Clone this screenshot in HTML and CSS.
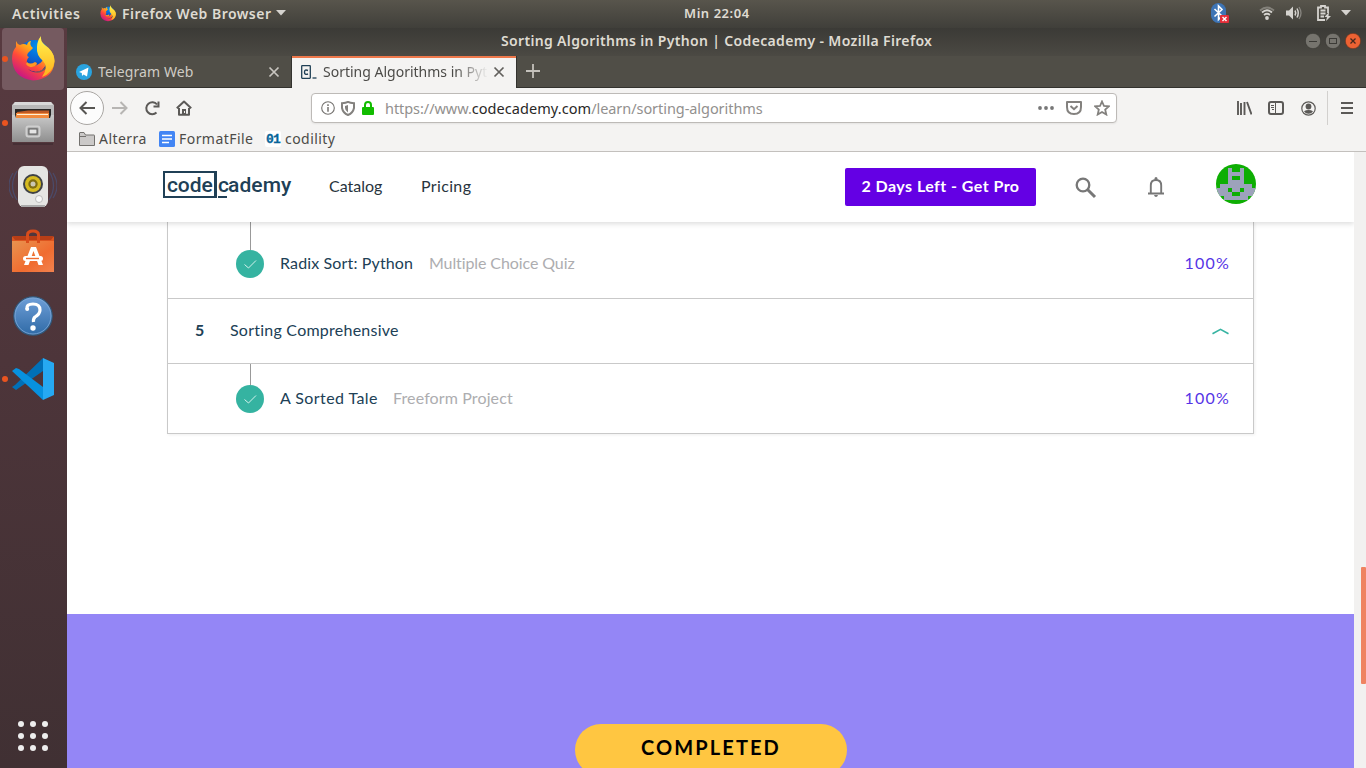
FILE: index.html
```html
<!DOCTYPE html>
<html lang="en">
<head>
<meta charset="utf-8">
<title>Sorting Algorithms in Python | Codecademy</title>
<link rel="stylesheet" href="styles.css">
</head>
<body>
<svg width="0" height="0" class="defs">
  <defs>
    <linearGradient id="fxBody" x1="0.8" y1="0" x2="0.15" y2="0.9"><stop offset="0" stop-color="#ffe226"/><stop offset=".35" stop-color="#ffa51a"/><stop offset=".62" stop-color="#ff4a3a"/><stop offset="1" stop-color="#c4128a"/></linearGradient>
    <linearGradient id="fxFlame" x1="0" y1="0" x2="0" y2="1"><stop offset="0" stop-color="#fff44f"/><stop offset="1" stop-color="#ffb01c"/></linearGradient>
    <radialGradient id="fxGlobe" cx=".6" cy=".2" r=".9"><stop offset="0" stop-color="#0090ed"/><stop offset=".5" stop-color="#0b5fd0"/><stop offset="1" stop-color="#27206b"/></radialGradient>
    <linearGradient id="steel" x1="0" y1="0" x2="0" y2="1"><stop offset="0" stop-color="#c9c9c9"/><stop offset="1" stop-color="#8f8f8f"/></linearGradient>
    <linearGradient id="bag" x1="0" y1="0" x2="1" y2="1"><stop offset="0" stop-color="#e89450"/><stop offset=".6" stop-color="#f06c30"/><stop offset="1" stop-color="#f2824f"/></linearGradient>
    <linearGradient id="helpBlue" x1="0" y1="0" x2="0" y2="1"><stop offset="0" stop-color="#6f9fd8"/><stop offset="1" stop-color="#2f6aa6"/></linearGradient>
    <symbol id="firefox" viewBox="0 0 44 46">
      <circle cx="23" cy="20" r="16" fill="url(#fxGlobe)"/>
      <path d="M5 5Q6 8 9 9Q13 7 16 9Q17 5 20 5Q18 9 22 12L17 17Q15 20 18 21Q15 24 16 28Q19 32 26 29Q33 26 33 19Q38 28 31 34Q24 38 17 33Q27 41 36 32Q41 24 37 12Q44 18 43.500 26Q42 43 22 44.500Q2 42 1 23Q1 15 5 11Z" fill="url(#fxBody)"/>
      <path d="M30 0Q29 5 34 9Q43 15 43.500 25Q42 37 31 41Q38 31 32 25Q25 19 26 11Q26 5 30 0Z" fill="url(#fxFlame)"/>
      <path d="M16 26Q19 29 24 26Q28 27 24 30Q18 33 15 28Z" fill="#ff9722"/>
    </symbol>
    <symbol id="check" viewBox="0 0 28 28"><circle cx="14" cy="14" r="14" fill="#35b3a1"/><path d="M8.500 14.500L12.500 18L20 10.500" fill="none" stroke="#d4f2ec" stroke-width="1"/></symbol>
  </defs>
</svg>
<div class="desktop">
  <header class="panel">
    <span class="panel-activities">Activities</span>
    <svg class="panel-fx" width="16" height="17"><use href="#firefox"/></svg>
    <span class="panel-app">Firefox Web Browser</span>
    <svg class="panel-caret" width="10" height="6"><path d="M0 0H10L5 5.500Z" fill="#d5d3cf"/></svg>
    <span class="panel-clock">Min 22:04</span>
    <div class="panel-tray">
      <svg class="bluetooth" width="19" height="21" viewBox="0 0 19 21"><rect x="0" y="0" width="15" height="20" rx="7.500" fill="#3d74b5"/><path d="M3.500 6L11 13L7.500 16.500V3L11 6.500L3.500 13.500" fill="none" stroke="#fff" stroke-width="1.600"/><rect x="9" y="12" width="9" height="8" rx="1" fill="#e32d38"/><path d="M11.500 14L15.500 18M15.500 14L11.500 18" stroke="#fff" stroke-width="1.400"/></svg>
      <svg class="wifi" width="16" height="14" viewBox="0 0 16 14"><g fill="none" stroke-width="1.700"><path d="M1 4.500Q8 -1.500 15 4.500" stroke="#83817a"/><path d="M3 6.500Q8 2 13 6.500M5 9Q8 6.500 11 9" stroke="#d5d3cf"/></g><circle cx="8" cy="12" r="1.900" fill="#d5d3cf"/></svg>
      <svg class="volume" width="16" height="14" viewBox="0 0 16 14"><path d="M0 4.500H3L7 .5V13.500L3 9.500H0Z" fill="#d5d3cf"/><path d="M9 4.500Q10.500 7 9 9.500M11 2.500Q13.500 7 11 11.500" fill="none" stroke="#d5d3cf" stroke-width="1.500"/><path d="M13 1Q17 7 13 13" fill="none" stroke="#888680" stroke-width="1.300"/></svg>
      <svg class="battery" width="15" height="17" viewBox="0 0 15 17"><path d="M8 15H1V2.500H4V1H8V2.500H11V8M3.500 5.500H8.500M3.500 8.500H8.500M3.500 11.500H7" fill="none" stroke="#d5d3cf" stroke-width="1.800"/><path d="M12 7L7.500 12H10L9 16L14 11H11.500Z" fill="#d5d3cf"/></svg>
      <svg class="tray-caret" width="10" height="6"><path d="M0 0H10L5 5.500Z" fill="#d5d3cf"/></svg>
    </div>
  </header>
  <nav class="dock">
    <div class="dock-item active"><svg width="44" height="46"><use href="#firefox"/></svg></div>
    <div class="dock-item running"><svg width="44" height="46" viewBox="0 0 44 46"><path d="M4 2H40L43 5V16H1V5Z" fill="#b8b8b8"/><path d="M4 2H40L42 5H2Z" fill="#d9d9d9"/><rect x="4" y="9" width="36" height="12" fill="#292827"/><path d="M6 12L17 10.500H38V20H5Z" fill="#bd5925"/><path d="M5 13H38V20H5Z" fill="#f18a3d"/><path d="M6 14.500H37" stroke="#fff0d6"/><path d="M1 15H4L5 18H39L40 15H43V42H1Z" fill="url(#steel)"/><path d="M2 44H42" stroke="#39272d"/><rect x="15.500" y="26.500" width="13" height="10" rx="2" fill="#999" stroke="#cfcfcf" stroke-width="2"/><rect x="18" y="29" width="8" height="5" fill="#e5e5e5" stroke="#5f5f5f"/></svg></div>
    <div class="dock-item"><svg width="48" height="46" viewBox="0 0 48 46"><g fill="none" stroke="#4b4a68" stroke-width="1.300"><path d="M8 7Q-1 22 8 36M4 9Q-4 22 4 34M40 7Q49 22 40 36M44 9Q52 22 44 34"/></g><rect x="9" y="2" width="30" height="41" rx="6" fill="#e5e5e3"/><path d="M12 42H36" stroke="#aaa" stroke-width="2"/><circle cx="24" cy="20" r="10" fill="#3f4245"/><circle cx="24" cy="20" r="8" fill="#d6bb20"/><circle cx="24" cy="20" r="4.700" fill="#806e12"/><circle cx="24" cy="20" r="2.500" fill="#cbc7b2"/><circle cx="30" cy="35" r="3.500" fill="#f8f8f8" stroke="#bbb"/></svg></div>
    <div class="dock-item"><svg width="44" height="46" viewBox="0 0 44 46"><path d="M2 8H42L43 13H1Z" fill="#b73e17"/><path d="M1 12H43V44H1Z" fill="url(#bag)"/><path d="M1 8L4 12H40L43 8V13H1Z" fill="#dd541f"/><path d="M16.500 15V7Q16.500 3 22 3Q27.500 3 27.500 7V15" fill="none" stroke="#d94c1b" stroke-width="3"/><path d="M13 37L20 19H25L32 37H27.500L22.500 23L17.500 37Z" fill="#fff"/><rect x="12" y="28" width="20" height="5" rx="2.500" fill="#fff"/><path d="M15 30.500H28" stroke="#f06c30" stroke-width="1.400"/></svg></div>
    <div class="dock-item"><svg class="help" width="42" height="44" viewBox="0 0 42 44"><circle cx="21" cy="22" r="19.200" fill="url(#helpBlue)" stroke="#315779" stroke-width="1.200"/><circle cx="21" cy="22" r="18" fill="none" stroke="#7faad8" stroke-width=".8"/><path d="M15 15Q14 10 21 10Q28 10 28 16Q28 20 23 23Q21 25 21.500 28" fill="none" stroke="#fff" stroke-width="3.200"/><circle cx="15.200" cy="15" r="2" fill="#fff"/><circle cx="21" cy="34" r="2.700" fill="#fff"/></svg></div>
    <div class="dock-item running"><svg width="44" height="44" viewBox="0 0 44 44"><path d="M32 1L4 28L1 30L5 33L32 14Z" fill="#0070b8"/><path d="M5 11L1 14L32 43V30L8 12Z" fill="#0791df"/><path d="M32 1L43 6V38L32 43Z" fill="#26a9f2"/></svg></div>
    <div class="dock-apps"><i></i><i></i><i></i><i></i><i></i><i></i><i></i><i></i><i></i></div>
  </nav>
  <main class="window">
    <div class="titlebar">
      <span class="window-title">Sorting Algorithms in Python | Codecademy - Mozilla Firefox</span>
      <div class="window-buttons">
        <svg width="16" height="16"><circle cx="8" cy="8" r="7.700" fill="#76746e" stroke="#33322e" stroke-width=".6"/><path d="M4 8.500H12" stroke="#3b3a36"/></svg>
        <svg width="16" height="16"><circle cx="8" cy="8" r="7.700" fill="#76746e" stroke="#33322e" stroke-width=".6"/><rect x="4.500" y="5.500" width="7" height="5" fill="none" stroke="#3b3a36"/></svg>
        <svg width="16" height="16"><circle cx="8" cy="8" r="7.700" fill="#ed6233" stroke="#61301f" stroke-width=".6"/><path d="M5.500 5.500L10.500 10.500M10.500 5.500L5.500 10.500" stroke="#46281d" stroke-width="1.300"/></svg>
      </div>
    </div>
    <div class="tabs">
      <div class="tab">
        <svg width="16" height="16"><circle cx="8" cy="8" r="8" fill="#29a3df"/><path d="M3 8L12.500 3.500L11 12.500L7.500 10.500L6 12L5.800 9Z" fill="#fff"/></svg>
        <span class="tab-label telegram">Telegram Web</span>
        <svg width="12" height="12"><path d="M1.500 1.500L10.500 10.500M10.500 1.500L1.500 10.500" stroke="#c9c6c0" stroke-width="1.700"/></svg>
      </div>
      <div class="tab current">
        <svg width="17" height="16"><rect x="1.700" y="1.700" width="8.600" height="12.600" rx=".5" fill="none" stroke="#204056" stroke-width="1.300"/><path d="M8 6.500Q4.500 5 4.500 8.200Q4.500 11.300 8 10" fill="none" stroke="#204056" stroke-width="1.400"/><path d="M12.500 14H16.500" stroke="#204056" stroke-width="1.300"/></svg>
        <span class="tab-label sorting">Sorting Algorithms in Pyt</span>
        <svg width="12" height="12"><path d="M1.500 1.500L10.500 10.500M10.500 1.500L1.500 10.500" stroke="#62605d" stroke-width="1.700"/></svg>
      </div>
      <svg class="new-tab" width="14" height="14"><path d="M7 0V14M0 7H14" stroke="#c4c1bb" stroke-width="1.800"/></svg>
    </div>
    <div class="toolbar">
      <div class="back"><svg width="16" height="14"><path d="M7.500 1L1.500 7L7.500 13M1.500 7H16" fill="none" stroke="#575653" stroke-width="2"/></svg></div>
      <svg class="forward" width="16" height="14"><path d="M8.500 1L14.500 7L8.500 13M14.500 7H0" fill="none" stroke="#b7b5b3" stroke-width="2"/></svg>
      <svg class="reload" width="16" height="16"><path d="M12.500 12.500A6 6 0 1 1 13 4.500M14.500 1.500V6.500H9.500" fill="none" stroke="#5b5957" stroke-width="2"/></svg>
      <svg class="home" width="16" height="16"><path d="M.8 8.200L8 1.500L15.200 8.200M3 8V14.800H13V8" fill="none" stroke="#5b5957" stroke-width="2" stroke-linejoin="round"/><path d="M6 15V9H10V15Z" fill="#5b5957"/><path d="M8.500 11V13" stroke="#f4f3f2"/></svg>
      <div class="url">
        <svg width="14" height="14"><circle cx="7" cy="7" r="6.300" fill="none" stroke="#74726f" stroke-width="1.100"/><path d="M7 3.300V5M7 6V10.800" stroke="#74726f" stroke-width="1.500"/></svg>
        <svg class="shield" width="14" height="15"><path d="M1 2.200Q5 2 7 .9Q9 2 13 2.200V7Q12 12 7 14Q2 12 1 7Z" fill="none" stroke="#83817e" stroke-width="2"/><path d="M7 4V11.500Q4 9.500 4 7V5Z" fill="#83817e"/></svg>
        <svg class="lock" width="12" height="14"><rect y="6" width="12" height="8" rx="1" fill="#12bc00"/><path d="M3 7V4Q3 1 6 1Q9 1 9 4V7" fill="none" stroke="#12bc00" stroke-width="2"/></svg>
        <span class="address">https://www.<b>codecademy.com</b>/learn/sorting-algorithms</span>
        <svg class="dots" width="16" height="4"><g fill="#777"><circle cx="2" cy="2" r="1.900"/><circle cx="8" cy="2" r="1.900"/><circle cx="14" cy="2" r="1.900"/></g></svg>
        <svg width="16" height="14"><path d="M1 1H15V6Q15 13 8 13Q1 13 1 6Z" fill="none" stroke="#83817e" stroke-width="2" stroke-linejoin="round"/><path d="M4.500 5L8 8.200L11.500 5" fill="none" stroke="#83817e" stroke-width="2"/></svg>
        <svg width="16" height="16"><path d="M8 1.500L10 6L14.800 6.400L11.200 9.600L12.300 14.500L8 12L3.700 14.500L4.800 9.600L1.200 6.400L6 6Z" fill="none" stroke="#83817e" stroke-width="1.800"/></svg>
      </div>
      <div class="tools">
        <svg width="16" height="14"><path d="M2 0V14M5 2V14M8.500 1V14M11 1L15.500 13.500" stroke="#5b5957" stroke-width="1.900" fill="none"/></svg>
        <svg class="sidebar-icon" width="16" height="14"><rect x="1" y="1" width="14" height="12" rx="2" fill="none" stroke="#5b5957" stroke-width="2"/><path d="M7.500 1V13M3 4.500H6M3 6.500H6M4 8.500H6" stroke="#5b5957"/></svg>
        <svg width="15" height="15"><circle cx="7.500" cy="7.500" r="6.700" fill="none" stroke="#5b5957" stroke-width="1.200"/><circle cx="7.500" cy="5.500" r="2.900" fill="#5b5957"/><path d="M3 10.200Q5 9 7.500 9Q10 9 12 10.200Q10.500 12.700 7.500 12.700Q4.500 12.700 3 10.200Z" fill="#5b5957"/></svg>
      </div>
      <div class="menu"><svg width="12" height="12"><path d="M0 1H12M0 6H12M0 11H12" stroke="#5b5957" stroke-width="1.900"/></svg></div>
    </div>
    <div class="bookmarks">
      <svg width="16" height="14"><path d="M.5 3V1Q.5 .5 1 .5H5L6.500 3H15Q15.500 3 15.500 3.500V13.500H.5Z" fill="#cbc9c8" stroke="#73716e"/><path d="M1 4.500H7" stroke="#73716e"/></svg><span class="bm alterra">Alterra</span>
      <svg width="16" height="16"><rect width="16" height="16" rx="1.500" fill="#4285f4"/><path d="M3 4.500H13M3 8H13M3 11.500H10" stroke="#fff" stroke-width="1.600"/></svg><span class="bm format">FormatFile</span>
      <span class="codility-icon">01</span><span class="bm">codility</span>
    </div>
    <div class="viewport">
      <div class="page">
        <div class="site-header">
          <div class="logo"><span class="logo-code">code</span><span class="logo-c">c</span><span class="logo-rest">ademy</span></div>
          <span class="catalog">Catalog</span><span class="pricing">Pricing</span>
          <div class="pro">2 Days Left - Get Pro</div>
          <svg class="search" width="22" height="22"><circle cx="8" cy="8" r="6.300" fill="none" stroke="#777" stroke-width="2.300"/><path d="M12.500 12.500L20 20" stroke="#777" stroke-width="3"/></svg>
          <svg class="bell" width="16" height="20"><path d="M0 16.500H16M2.800 16V8.500Q2.800 3 8 3Q13.200 3 13.200 8.500V16" fill="none" stroke="#777" stroke-width="1.900"/><path d="M6.500 1.500A1.500 1.500 0 0 1 9.500 1.500V3.500H6.500ZM6 18H10Q9.500 20 8 20Q6.500 20 6 18Z" fill="#777"/></svg>
          <svg class="avatar" width="40" height="40"><clipPath id="round"><circle cx="20" cy="20" r="20"/></clipPath><g clip-path="url(#round)" shape-rendering="crispEdges"><path fill="#0eae03" d="M0 0H40V40H0Z"/><path fill="#9da2bb" d="M12 4H16V8H24V4H28V20H36V24H40V32H32V36H8V32H0V24H4V20H12Z"/><path fill="#0eae03" d="M16 12H24V16H16ZM12 24H16V28H12ZM24 24H28V28H24ZM16 28H24V32H16Z"/></g></svg>
        </div>
        <div class="content">
          <div class="syllabus">
            <div class="lesson radix"><div class="rail"><svg width="28" height="28"><use href="#check"/></svg></div><span class="name name-radix">Radix Sort: Python</span><span class="kind kind-radix">Multiple Choice Quiz</span><span class="score">100%</span></div>
            <div class="module"><span class="number">5</span><span class="module-name">Sorting Comprehensive</span><svg width="17" height="7"><path d="M.5 5.700L8.500 1.300L16.500 5.700" fill="none" stroke="#35b3a1" stroke-width="1.600"/></svg></div>
            <div class="lesson tale"><div class="rail"><svg width="28" height="28"><use href="#check"/></svg></div><span class="name name-tale">A Sorted Tale</span><span class="kind kind-tale">Freeform Project</span><span class="score">100%</span></div>
          </div>
        </div>
        <div class="banner"><div class="completed">COMPLETED</div></div>
      </div>
      <div class="scrollbar"><div class="thumb"></div></div>
    </div>
  </main>
</div>
</body>
</html>
```
FILE: styles.css
```css
* { box-sizing: border-box; }
body { margin: 0; overflow: hidden; font-family: "Noto Sans", sans-serif; }
svg { display: block; flex: none; }
span { white-space: nowrap; flex: none; }
.defs { position: absolute; }
.desktop { width: 1366px; height: 768px; display: grid; grid-template: 28px 740px / 67px 1299px; }

.panel { grid-column: 1 / 3; display: flex; align-items: center; padding: 0 15px 2px 12px; background: linear-gradient(#58554c, #403f3a); color: #dfdbd2; font-size: 14px; font-weight: 600; }
.panel-activities { width: 88px; letter-spacing: .6px; }
.panel-fx { margin-right: 6px; }
.panel-app { width: 154px; letter-spacing: .48px; }
.panel-clock { margin-left: 398px; width: 70px; font-size: 13px; letter-spacing: .55px; }
.panel-tray { display: flex; align-items: center; margin-left: auto; }
.wifi { margin-left: 29px; }
.volume { margin-left: 11px; }
.battery { margin-left: 15px; }
.tray-caret { margin-left: 9px; }

.dock { background: linear-gradient(#583a40, #4d353a 45%, #403033); display: flex; flex-direction: column; padding-left: 2px; }
.dock-item { width: 62px; height: 62px; margin-bottom: 2px; border-radius: 4px; display: flex; align-items: center; justify-content: center; position: relative; }
.dock-item.active { background: #755a60; }
.dock-item.active::before, .dock-item.running::before { content: ""; position: absolute; left: 0; top: 28px; width: 6px; height: 6px; border-radius: 3px; background: #e95420; }
.help { margin-top: 2px; }
.dock-apps { display: grid; grid-template-columns: repeat(3, 6px); gap: 6px; margin: auto 0 17px 16px; }
.dock-apps i { width: 6px; height: 6px; border-radius: 50%; background: #eee; }

.window { display: flex; flex-direction: column; background: #f4f3f2; }
.titlebar { height: 28px; display: flex; align-items: center; background: linear-gradient(#3b3a36, #4b4943); color: #dfdbd2; font-size: 14px; font-weight: 600; padding: 0 5px 2px 434px; }
.window-title { letter-spacing: .34px; padding-bottom: 2px; }
.window-buttons { display: flex; gap: 4px; margin-left: auto; }
.tabs { height: 32px; background: #504e47; display: flex; align-items: center; border-bottom: 1px solid #33322e; }
.tab { width: 224px; height: 32px; display: flex; align-items: center; padding: 0 11px 0 9px; font-size: 14px; color: #cfccc5; margin-bottom: -1px; }
.tab-label { margin-left: 6px; overflow: hidden; padding-bottom: 2px; }
.telegram { width: 170px; letter-spacing: .12px; }
.sorting { width: 165px; margin-right: 5px; -webkit-mask-image: linear-gradient(90deg, #000 80%, transparent); mask-image: linear-gradient(90deg, #000 80%, transparent); }
.tab.current { width: 226px; border: solid #33322e; border-width: 0 1px; background: #f4f3f2; box-shadow: inset 0 2px #ee784b; color: #4c4b48; padding: 0 9px 0 8px; }
.new-tab { margin-left: 9px; margin-top: -1px; }
.toolbar { height: 40px; display: flex; align-items: center; padding: 0 13px 0 3px; }
.back { width: 34px; height: 34px; border: 1px solid #a9a6a3; border-radius: 50%; background: #fcfcfc; display: flex; align-items: center; justify-content: center; }
.forward { margin-left: 8px; }
.reload { margin-left: 16px; }
.home { margin-left: 16px; }
.url { width: 806px; height: 30px; margin-left: 119px; border: 1px solid #bdbab7; border-radius: 4px; background: #fff; box-shadow: 0 1px 2px #0001; display: flex; align-items: center; padding: 0 6px 0 9px; gap: 6px; }
.lock { margin: 0 5px 0 1px; }
.address { font-size: 14.500px; letter-spacing: -.06px; color: #92908e; margin-right: auto; }
.address b { font-weight: 400; color: #292827; letter-spacing: .06px; }
.dots { margin-right: 6px; }
.url .dots + svg { margin-right: 6px; }
.tools { display: flex; align-items: center; gap: 16px; margin-left: auto; }
.sidebar-icon { margin-right: 1px; }
.menu { margin-left: 11px; padding-left: 13px; border-left: 1px solid #d2d0ce; height: 34px; display: flex; align-items: center; }
.bookmarks { height: 24px; border-bottom: 1px solid #c3c0bd; display: flex; align-items: center; padding: 0 0 2px 12px; font-size: 14px; color: #4c4b48; letter-spacing: .45px; }
.bm { margin-left: 4px; }
.alterra { width: 60px; }
.format { width: 86px; }
.codility-icon { width: 16px; height: 16px; border-radius: 2px; background: #fff; color: #07659a; font: bold 13px/18px "Liberation Mono", monospace; text-align: center; letter-spacing: -.9px; -webkit-text-stroke: .3px #07659a; }

.viewport { flex: 1; display: flex; min-height: 0; }
.page { width: 1287px; height: 616px; overflow: hidden; background: #fff; display: flex; flex-direction: column; }
.site-header { height: 70px; flex: none; display: flex; align-items: center; padding: 0 98px 0 96px; box-shadow: 0 2px 5px #0002; position: relative; z-index: 1; background: #fff; font-size: 16px; color: #28343d; font-family: Lato, sans-serif; }
.logo { display: flex; width: 166px; height: 27px; margin-top: -6px; color: #204056; font: 500 21px/29px Roboto, sans-serif; letter-spacing: -.1px; }
.logo span { height: 27px; }
.logo-code { width: 54px; border: 2.500px solid #204056; border-right-width: 3px; padding-left: 2px; line-height: 25px; }
.logo-c { width: 9px; margin-left: 1px; box-shadow: inset 0 -2px #204056; }
.logo-rest { letter-spacing: .1px; margin-left: 1px; }
.catalog { width: 92px; padding-bottom: 3px; }
.pricing { width: 50px; padding-bottom: 3px; letter-spacing: .35px; }
.pro { width: 191px; height: 38px; margin-left: 374px; border-radius: 2px; background: #6400e4; color: #fff; font-weight: 700; line-height: 36px; text-align: center; white-space: nowrap; letter-spacing: .45px; }
.search { margin-left: 39px; margin-top: 1px; }
.bell { margin-left: 51px; }
.avatar { margin-left: auto; margin-top: -6px; }
.content { height: 392px; flex: none; padding-left: 100px; }
.syllabus { width: 1087px; height: 212px; border: 1px solid #c9c9c9; border-top: 0; box-shadow: 1px 1px 3px #0001; font: 16px Lato, sans-serif; color: #204056; }
.syllabus span { padding-bottom: 2px; }
.lesson, .module { display: flex; align-items: center; }
.lesson { padding: 0 24px 0 68px; position: relative; }
.radix { height: 77px; padding-bottom: 7px; border-bottom: 1px solid #c9c9c9; padding-top: 14px; }
.rail { display: flex; align-items: center; margin-right: 16px; }
.lesson::before { content: ""; position: absolute; left: 82px; top: 0; width: 1px; height: 28px; background: #999; }
.name-radix { width: 149px; letter-spacing: .14px; }
.name-tale { width: 113px; letter-spacing: .42px; }
.kind { color: #adadb0; }
.kind-radix { letter-spacing: -.1px; }
.kind-tale { letter-spacing: .12px; }
.score { margin-left: auto; color: #5534e6; letter-spacing: 1.200px; margin-right: -1px; }
.module { height: 65px; border-bottom: 1px solid #c9c9c9; padding: 0 24px 0 27px; }
.syllabus .module span { padding-bottom: 4px; }
.module-name { letter-spacing: .24px; }
.number { width: 35px; font-weight: 700; }
.module svg { margin-left: auto; }
.tale { height: 69px; }
.tale::before { height: 21px; }
.banner { flex: 1; background: #9486f6; padding: 110px 0 0 508px; }
.completed { width: 272px; height: 52px; border-radius: 26px; background: #ffc641; color: #000; font: 700 20px/47px Lato, sans-serif; text-align: center; letter-spacing: 2.100px; }
.scrollbar { width: 12px; background: #f2f1f0; padding: 415px 0 0 7px; }
.thumb { height: 117px; background: #ef8361; border-radius: 1px; }
```
